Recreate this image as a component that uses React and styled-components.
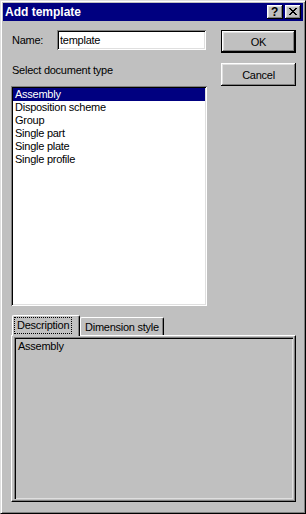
import React from "react";
import styled, { createGlobalStyle, css } from "styled-components";

const GlobalStyle = createGlobalStyle`
  html, body {
    margin: 0;
    padding: 0;
    background: #c0c0c0;
  }
  body {
    font-family: "Liberation Sans", Arial, sans-serif;
    font-size: 11px;
    letter-spacing: -0.25px;
    color: #000;
  }
`;

const docTypes = [
  "Assembly",
  "Disposition scheme",
  "Group",
  "Single part",
  "Single plate",
  "Single profile",
];

const raised = css`
  box-shadow: inset -1px -1px #000, inset 1px 1px #fff,
    inset -2px -2px #808080, inset 2px 2px #dfdfdf;
`;

const sunken = css`
  box-shadow: inset 1px 1px #808080, inset -1px -1px #fff,
    inset 2px 2px #000, inset -2px -2px #dfdfdf;
`;

const App = () => {
  const selected = 0;

  return (
    <>
      <GlobalStyle />
      <Window>
        <TitleBar>
          <Title>Add template</Title>
          <CaptionButtons>
            <CaptionBtn>
              <HelpGlyph>?</HelpGlyph>
            </CaptionBtn>
            <CaptionBtn>
              <svg width="8" height="7" viewBox="0 0 8 7" shapeRendering="crispEdges">
                <path
                  fill="#000"
                  d="M0 0h2v1H0zM6 0h2v1H6zM1 1h2v1H1zM5 1h2v1H5zM2 2h4v1H2zM3 3h2v1H3zM2 4h4v1H2zM1 5h2v1H1zM5 5h2v1H5zM0 6h2v1H0zM6 6h2v1H6z"
                />
              </svg>
            </CaptionBtn>
          </CaptionButtons>
        </TitleBar>

        <Body>
          <TopSection>
            <LeftColumn>
              <NameRow>
                <NameLabel>Name:</NameLabel>
                <NameInput defaultValue="template" />
              </NameRow>
              <SelectLabel>Select document type</SelectLabel>
              <ListBox>
                {docTypes.map((t, i) => (
                  <ListItem key={t} selected={i === selected}>
                    {t}
                  </ListItem>
                ))}
              </ListBox>
            </LeftColumn>
            <RightColumn>
              <PushButton isDefault>OK</PushButton>
              <PushButton>Cancel</PushButton>
            </RightColumn>
          </TopSection>

          <TabStrip>
            <Tab active>
              <FocusText>Description</FocusText>
            </Tab>
            <Tab>Dimension style</Tab>
          </TabStrip>
          <TabPanel>
            <DescriptionBox>{docTypes[selected]}</DescriptionBox>
          </TabPanel>
        </Body>
      </Window>
    </>
  );
};

export default App;

const Window = styled.div`
  width: 306px;
  height: 514px;
  box-sizing: border-box;
  background: #c0c0c0;
  border: 1px solid;
  border-color: #dfdfdf #000 #000 #dfdfdf;
  box-shadow: inset 1px 1px #fff, inset -1px -1px #808080;
  padding: 2px;
  display: flex;
  flex-direction: column;
`;

const TitleBar = styled.div`
  height: 18px;
  background: #000080;
  display: flex;
  align-items: center;
  justify-content: space-between;
  padding: 0 2px 0 2px;
`;

const Title = styled.span`
  color: #fff;
  font-weight: 700;
  font-size: 12px;
  letter-spacing: 0;
  line-height: 18px;
`;

const CaptionButtons = styled.div`
  display: flex;
  gap: 2px;
`;

const CaptionBtn = styled.div`
  width: 16px;
  height: 14px;
  box-sizing: border-box;
  background: #c0c0c0;
  ${raised};
  display: flex;
  align-items: center;
  justify-content: center;
  padding: 0 1px 1px 0;
`;

const HelpGlyph = styled.span`
  font-weight: 700;
  font-size: 12px;
  line-height: 12px;
  color: #000;
`;

const Body = styled.div`
  flex: 1;
  display: flex;
  flex-direction: column;
  padding: 9px 7px 9px 8px;
`;

const TopSection = styled.div`
  display: flex;
  gap: 14px;
`;

const LeftColumn = styled.div`
  width: 196px;
  display: flex;
  flex-direction: column;
`;

const NameRow = styled.div`
  display: flex;
  align-items: center;
  height: 20px;
`;

const NameLabel = styled.span`
  width: 45px;
  padding-left: 1px;
`;

const NameInput = styled.input`
  width: 149px;
  height: 20px;
  box-sizing: border-box;
  border: none;
  outline: none;
  margin: 0;
  padding: 0 2px 0 3px;
  background: #fff;
  font: inherit;
  letter-spacing: inherit;
  color: #000;
  ${sunken};
`;

const SelectLabel = styled.div`
  margin-top: 14px;
  padding-left: 1px;
  line-height: 13px;
`;

const ListBox = styled.ul`
  list-style: none;
  margin: 9px 0 0 0;
  padding: 2px;
  width: 196px;
  height: 220px;
  box-sizing: border-box;
  background: #fff;
  ${sunken};
`;

const ListItem = styled.li`
  height: 13px;
  line-height: 13px;
  padding-left: 2px;
  white-space: nowrap;
  ${(props) =>
    props.selected &&
    css`
      background: #000080;
      color: #fff;
    `}
`;

const RightColumn = styled.div`
  width: 75px;
  display: flex;
  flex-direction: column;
  gap: 10px;
`;

const PushButton = styled.div`
  width: 75px;
  height: 23px;
  box-sizing: border-box;
  background: #c0c0c0;
  display: flex;
  align-items: center;
  justify-content: center;
  ${raised};
  ${(props) =>
    props.isDefault &&
    css`
      border: 1px solid #000;
    `}
`;

const TabStrip = styled.div`
  display: flex;
  align-items: flex-end;
  height: 20px;
  margin-top: 9px;
  padding-left: 1px;
  position: relative;
  z-index: 1;
`;

const Tab = styled.div`
  box-sizing: border-box;
  background: #c0c0c0;
  border-top: 1px solid #fff;
  border-left: 1px solid #fff;
  border-right: 1px solid #000;
  border-radius: 2px 2px 0 0;
  box-shadow: inset -1px 0 #808080;
  display: flex;
  align-items: center;
  white-space: nowrap;
  ${(props) =>
    props.active
      ? css`
          width: 68px;
          height: 21px;
          margin-bottom: -1px;
          padding: 0 2px 2px 2px;
        `
      : css`
          width: 84px;
          height: 18px;
          padding: 0 0 0 4px;
        `}
`;

const FocusText = styled.span`
  outline: 1px dotted #000;
  padding: 1px 2px 1px 2px;
  line-height: 13px;
`;

const TabPanel = styled.div`
  height: 167px;
  box-sizing: border-box;
  border-top: 1px solid #fff;
  border-left: 1px solid #fff;
  border-right: 1px solid #000;
  border-bottom: 1px solid #000;
  box-shadow: inset -1px -1px #808080;
  padding: 1px 2px 2px 2px;
  display: flex;
`;

const DescriptionBox = styled.div`
  flex: 1;
  box-sizing: border-box;
  padding: 3px 4px;
  line-height: 13px;
  box-shadow: inset 1px 1px #808080, inset 2px 2px #000,
    inset -1px -1px #dfdfdf;
`;
